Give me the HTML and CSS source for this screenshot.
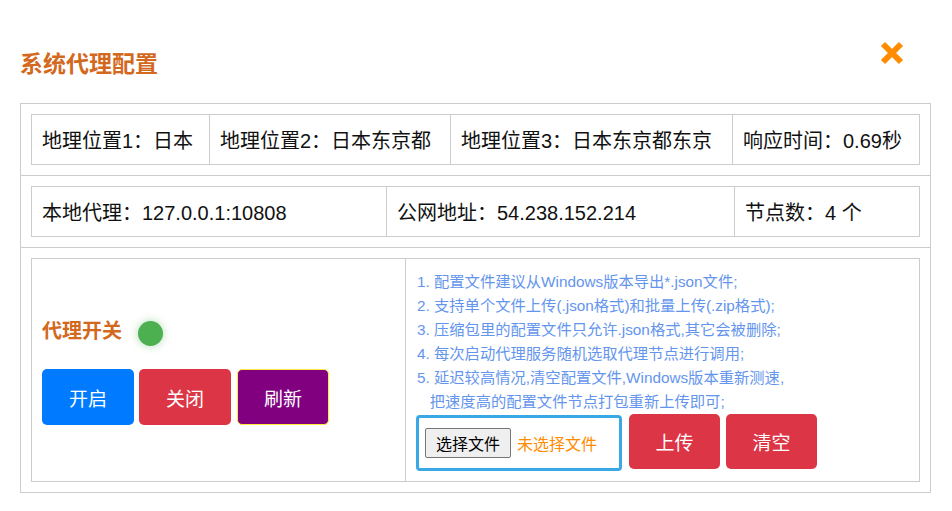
FILE: index.html
```html
<!DOCTYPE html>
<html lang="zh-CN">
<head>
<meta charset="utf-8">
<title>系统代理配置</title>
<link rel="stylesheet" href="styles.css">
</head>
<body>
<div class="modal">
  <div class="header">
    <h3 class="title">系统代理配置</h3>
    <button class="close" aria-label="关闭">
      <svg width="26" height="26" viewBox="0 0 26 26"><path d="M4 4 L22 22 M22 4 L4 22" stroke="#ff8c00" stroke-width="6" fill="none"/></svg>
    </button>
  </div>
  <div class="box">
    <div class="row">
      <div class="cells cells-geo">
        <div class="cell">地理位置1：日本</div>
        <div class="cell">地理位置2：日本东京都</div>
        <div class="cell">地理位置3：日本东京都东京</div>
        <div class="cell">响应时间：0.69秒</div>
      </div>
    </div>
    <div class="row">
      <div class="cells cells-net">
        <div class="cell">本地代理：127.0.0.1:10808</div>
        <div class="cell">公网地址：54.238.152.214</div>
        <div class="cell">节点数：4 个</div>
      </div>
    </div>
    <div class="row">
      <div class="cells cells-ctrl">
        <div class="cell switch-cell">
          <div class="switch-head">
            <span class="switch-label">代理开关</span>
            <span class="status-dot"></span>
          </div>
          <div class="btn-row">
            <button class="btn btn-blue">开启</button>
            <button class="btn btn-red">关闭</button>
            <button class="btn btn-purple">刷新</button>
          </div>
        </div>
        <div class="cell upload-cell">
          <p class="notes">1. 配置文件建议从Windows版本导出*.json文件;<br>2. 支持单个文件上传(.json格式)和批量上传(.zip格式);<br>3. 压缩包里的配置文件只允许.json格式,其它会被删除;<br>4. 每次启动代理服务随机选取代理节点进行调用;<br>5. 延迟较高情况,清空配置文件,Windows版本重新测速,<br>&nbsp;&nbsp;&nbsp;把速度高的配置文件节点打包重新上传即可;</p>
          <div class="upload-row">
            <label class="file-box">
              <span class="file-btn">选择文件</span>
              <span class="file-none">未选择文件</span>
            </label>
            <button class="btn btn-red btn-upload">上传</button>
            <button class="btn btn-red btn-upload">清空</button>
          </div>
        </div>
      </div>
    </div>
  </div>
</div>
</body>
</html>
```
FILE: styles.css
```css
* { box-sizing: border-box; }
html, body { margin: 0; background: #fff; }
body {
  font-family: "Liberation Sans", "Noto Sans CJK SC", sans-serif;
  color: #111;
}
.modal { padding: 0 20px 0 20px; width: 952px; }
.header {
  height: 103px;
  display: flex;
  justify-content: space-between;
  align-items: flex-start;
}
.title {
  margin: 50px 0 0 0;
  font-size: 23px;
  line-height: 28px;
  font-weight: bold;
  color: #d2691e;
}
.close {
  margin: 40px 27px 0 0;
  padding: 0;
  border: 0;
  background: none;
  width: 26px;
  height: 26px;
  display: block;
}
.close svg { display: block; }
.box {
  width: 911px;
  border: 1px solid #ccc;
}
.row { padding: 10px; }
.row + .row { border-top: 1px solid #ccc; }
.cells {
  display: grid;
  border: 1px solid #ccc;
  font-size: 20px;
}
.cells-geo { grid-template-columns: 177px 241px 282px 1fr; }
.cells-net { grid-template-columns: 354px 348px 1fr; }
.cells-ctrl { grid-template-columns: 373px 1fr; }
.cell {
  height: 49px;
  padding: 0 10px;
  display: flex;
  align-items: center;
  white-space: nowrap;
}
.cell + .cell { border-left: 1px solid #ccc; }
.cells-ctrl .cell { height: 222px; }
.switch-cell {
  flex-direction: column;
  align-items: flex-start;
  justify-content: center;
}
.switch-head { display: flex; align-items: center; gap: 16px; }
.switch-label {
  font-size: 20px;
  line-height: 24px;
  font-weight: bold;
  color: #d2691e;
}
.status-dot {
  width: 25px;
  height: 25px;
  margin-top: 6px;
  border-radius: 50%;
  background: #4caf50;
  box-shadow: 0 0 8px rgba(76, 175, 80, 0.45);
}
.btn-row { display: flex; gap: 5px; margin-top: 23px; }
.btn {
  width: 92px;
  height: 56px;
  border: 0;
  border-radius: 5px;
  color: #fff;
  font-family: inherit;
  font-size: 19px;
  padding: 0;
}
.btn-blue { background: #007bff; }
.btn-red { background: #dc3545; }
.btn-purple { background: #800080; border: 1px solid #ffeb3b; margin-left: 1px; }
.upload-cell {
  flex-direction: column;
  align-items: flex-start;
  justify-content: flex-start;
  padding: 11px 10px 10px 10px;
}
.notes {
  margin: 0 0 0 1px;
  font-size: 15.3px;
  line-height: 24px;
  color: #6495ed;
}
.upload-row { display: flex; align-items: flex-start; gap: 6px; }
.file-box {
  width: 206px;
  height: 56px;
  margin-top: 1px;
  margin-right: 1px;
  border: 3px solid #3aa8e4;
  border-radius: 4px;
  display: flex;
  align-items: center;
  padding-left: 6px;
  gap: 6px;
  font-size: 16px;
}
.file-btn {
  height: 30px;
  padding: 0 10px;
  border: 1px solid #767676;
  border-radius: 2px;
  background: #efefef;
  color: #000;
  display: flex;
  align-items: center;
}
.file-none { color: #ff8c00; }
.btn-upload { width: 91px; height: 55px; }
```
